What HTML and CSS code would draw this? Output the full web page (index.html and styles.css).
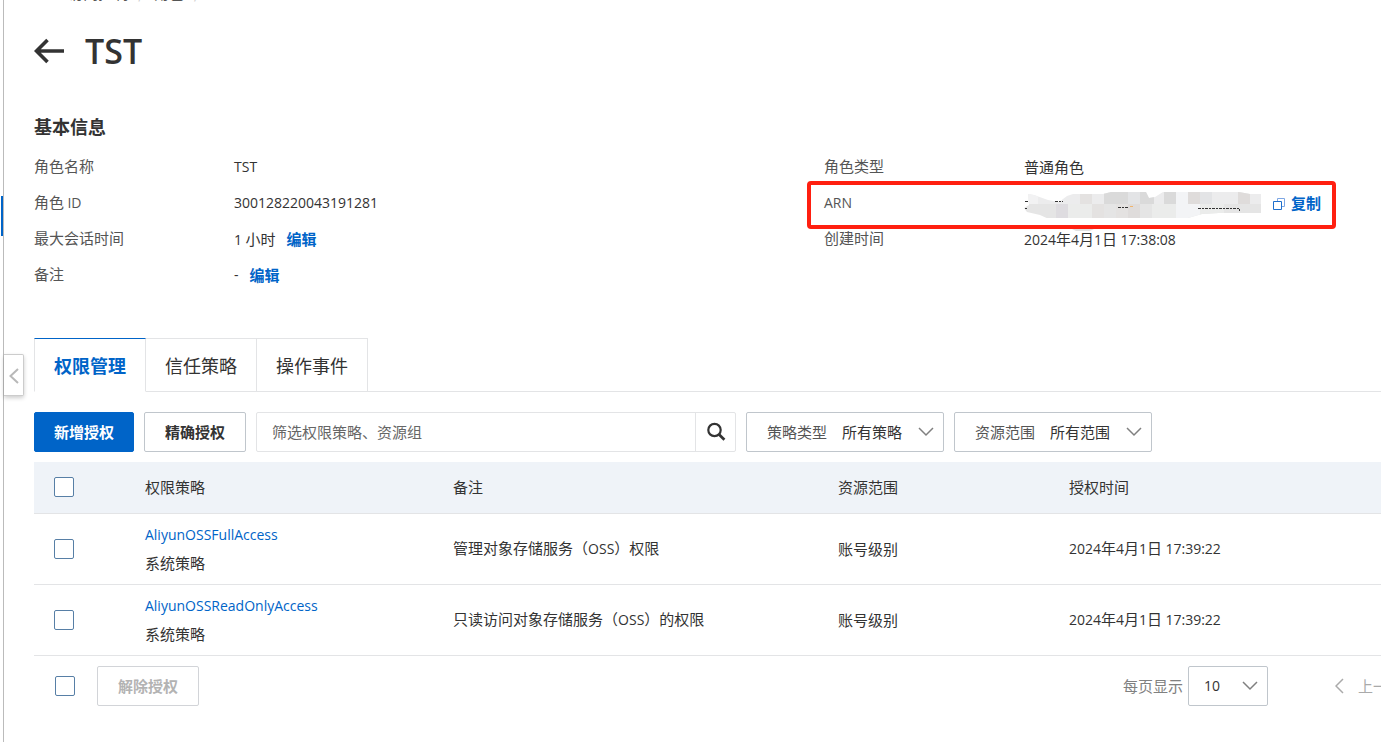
FILE: index.html
```html
<!DOCTYPE html>
<html lang="zh-CN">
<head>
<meta charset="utf-8">
<title>TST - RAM 访问控制</title>
<link rel="stylesheet" href="styles.css">
</head>
<body>
<div class="app">
  <aside class="rail">
    <span class="rail-active"></span>
    <button class="rail-toggle" type="button" aria-label="收起">
      <svg width="10" height="16" viewBox="0 0 10 16"><path d="M9 1 1.500 8 9 15" fill="none" stroke="#b8b8b8" stroke-width="2"/></svg>
    </button>
  </aside>
  <main class="main">
    <nav class="crumbs">
      <a href="#">RAM 访问控制</a><span class="sep">/</span><a href="#">角色</a><span class="sep">/</span>
    </nav>
    <header class="title">
      <a href="#" class="back" aria-label="返回">
        <svg width="31" height="26" viewBox="0 0 31 26"><path d="M13.500 2 2.500 13l11 11M3 13h27" fill="none" stroke="#333" stroke-width="3.600"/></svg>
      </a>
      <h1>TST</h1>
    </header>

    <section>
      <h2>基本信息</h2>
      <dl class="info">
        <div class="item"><dt>角色名称</dt><dd><span class="lat">TST</span></dd></div>
        <div class="item"><dt>角色类型</dt><dd>普通角色</dd></div>
        <div class="item"><dt>角色 <span class="lat">ID</span></dt><dd><span class="lat">300128220043191281</span></dd></div>
        <div class="item marked"><dt><span class="lat">ARN</span></dt>
          <dd>
            <svg class="mosaic" width="238" height="26" viewBox="0 0 238 26" aria-hidden="true">
              <defs><clipPath id="smear"><path d="M4 4l6 1 14 5 11 2 8-6 6-2h30l8-2h35l3 6 6-1 8-5h76l11 2h11v19h-42l-17 1-14 4-3 2H27l-11-5-13-3-3-4 5-3z"/></clipPath></defs>
              <g clip-path="url(#smear)">
                <path fill="#ececed" d="M0 0h238v14H0z"/>
                <path fill="#e5e5e5" d="M0 14h238v14H0z"/>
                <path fill="#f2f2f3" d="M4 0h10v14H4z"/>
                <path fill="#e4e2e1" d="M56 0h12v14H56zM68 14h12v14H68zM92 14h12v14H92z"/>
                <path fill="#dadada" d="M80 0h24v14H80zM116 0h14v14h-14zM140 0h12v14h-12z"/>
                <path fill="#dfdcdb" d="M164 0h12v14h-12zM214 0h12v14h-12zM104 14h12v14h-12z"/>
                <path fill="#dedce0" d="M32 14h12v14H32z"/>
                <path fill="#ebeceb" d="M44 14h24v14H44zM128 14h24v14h-24zM176 14h24v14h-24z"/>
                <path fill="#f3f4f6" d="M152 14h24v14h-24zM152 0h12v14h-12z"/>
                <path fill="#e3e4e6" d="M104 0h12v14h-12zM176 0h12v14h-12z"/>
              </g>
              <path stroke="#333" d="M1 11.500h3M31 11.500h8M94 17.500h10M174 18.500h42" stroke-dasharray="3 1 2 1" fill="none"/>
              <path fill="#333" d="M215 19h1v2h-1zM1 18h2v1H1z"/><path fill="#f0b46b" d="M106 16h3v1h-3z"/>
              <path fill="#e1e1e1" d="M46 38h26l-6 3H52z"/>
            </svg>
            <button class="link copy" type="button">
              <svg width="13" height="13" viewBox="0 0 13 13" fill="none"><path stroke="#1f6fcc" d="M.5 4.500h8v8h-8z"/><path stroke="#7da6e4" d="M4.500 4V1.500h7v8H9"/></svg>复制</button>
          </dd>
        </div>
        <div class="item"><dt>最大会话时间</dt><dd><span><span class="lat">1</span> 小时</span><button class="link" type="button">编辑</button></dd></div>
        <div class="item"><dt>创建时间</dt><dd><span><span class="lat">2024</span>年<span class="lat">4</span>月<span class="lat">1</span>日 <span class="lat">17:38:08</span></span></dd></div>
        <div class="item"><dt>备注</dt><dd><span class="lat">-</span><button class="link" type="button">编辑</button></dd></div>
      </dl>
    </section>

    <div class="tabs" role="tablist">
      <button class="tab active" role="tab" aria-selected="true" type="button">权限管理</button>
      <button class="tab" role="tab" aria-selected="false" type="button">信任策略</button>
      <button class="tab" role="tab" aria-selected="false" type="button">操作事件</button>
    </div>

    <form class="toolbar">
      <button class="btn primary" type="button">新增授权</button>
      <button class="btn" type="button">精确授权</button>
      <div class="search">
        <input type="text" placeholder="筛选权限策略、资源组" aria-label="筛选权限策略、资源组">
        <button type="button" aria-label="搜索">
          <svg width="20" height="20" viewBox="0 0 20 20" fill="none" stroke="#333"><circle cx="8.500" cy="8" r="6.200" stroke-width="2.200"/><path d="m12.800 12.300 5.600 5.400" stroke-width="2.800"/></svg>
        </button>
      </div>
      <div class="picker">
        <label for="ptype">策略类型</label>
        <select id="ptype"><option>所有策略</option></select>
        <svg class="chev" width="16" height="10" viewBox="0 0 16 10"><path d="m1 1 7 7 7-7"/></svg>
      </div>
      <div class="picker">
        <label for="scope">资源范围</label>
        <select id="scope"><option>所有范围</option></select>
        <svg class="chev" width="16" height="10" viewBox="0 0 16 10"><path d="m1 1 7 7 7-7"/></svg>
      </div>
    </form>

    <table class="grid">
      <colgroup><col class="c-check"><col class="c-policy"><col class="c-note"><col class="c-scope"><col></colgroup>
      <thead>
        <tr><th><input type="checkbox" aria-label="全选"></th><th>权限策略</th><th>备注</th><th>资源范围</th><th>授权时间</th></tr>
      </thead>
      <tbody>
        <tr>
          <td><input type="checkbox" aria-label="AliyunOSSFullAccess"></td>
          <td><a href="#" class="lat">AliyunOSSFullAccess</a><div>系统策略</div></td>
          <td>管理对象存储服务<span class="paren" lang="zh-TW">（</span><span class="lat">OSS</span><span class="paren" lang="zh-TW">）</span>权限</td>
          <td>账号级别</td>
          <td><span class="lat">2024</span>年<span class="lat">4</span>月<span class="lat">1</span>日 <span class="lat">17:39:22</span></td>
        </tr>
        <tr>
          <td><input type="checkbox" aria-label="AliyunOSSReadOnlyAccess"></td>
          <td><a href="#" class="lat">AliyunOSSReadOnlyAccess</a><div>系统策略</div></td>
          <td>只读访问对象存储服务<span class="paren" lang="zh-TW">（</span><span class="lat">OSS</span><span class="paren" lang="zh-TW">）</span>的权限</td>
          <td>账号级别</td>
          <td><span class="lat">2024</span>年<span class="lat">4</span>月<span class="lat">1</span>日 <span class="lat">17:39:22</span></td>
        </tr>
      </tbody>
    </table>

    <footer class="foot">
      <input type="checkbox" aria-label="全选本页">
      <button class="btn" type="button" disabled>解除授权</button>
      <label class="per-label" for="per">每页显示</label>
      <div class="picker small">
        <select id="per" class="lat"><option>10</option></select>
        <svg class="chev" width="16" height="10" viewBox="0 0 16 10"><path d="m1 1 7 7 7-7"/></svg>
      </div>
      <nav class="pager">
        <button type="button" disabled><svg width="9" height="16" viewBox="0 0 9 16"><path d="M8 1 1 8l7 7" fill="none" stroke="#aaa" stroke-width="1.500"/></svg>上一页</button>
      </nav>
    </footer>
  </main>
</div>
</body>
</html>
```

FILE: styles.css
```css
* { box-sizing: border-box; }

body {
  margin: 0;
  background: #fff;
  color: #333;
  font: 15px/20px "Noto Sans CJK SC", sans-serif;
}

button, input, select { font: inherit; color: inherit; }
button { padding: 0; border: 0; background: none; cursor: pointer; }
a { color: #0064c8; text-decoration: none; }
svg { display: block; flex: none; }
.lat { font-family: "Open Sans", "Noto Sans CJK SC", sans-serif; font-size: 14px; }
.paren { font-family: "Noto Sans CJK TC", sans-serif; }

.app { display: flex; min-height: 100vh; }

.rail {
  position: relative;
  flex: 0 0 4px;
  border-right: 1px solid #bbb;
}
.rail-active {
  position: absolute;
  top: 196px;
  left: 1px;
  width: 2px;
  height: 40px;
  background: #0064c8;
}
.rail-toggle {
  position: absolute;
  top: 354px;
  left: 4px;
  width: 20px;
  height: 42px;
  padding: 2px 0 0 5px;
  border: 1px solid #ccc;
  border-left: 0;
  border-radius: 0 2px 2px 0;
  background: #fff;
  box-shadow: 0 2px 4px rgba(0, 0, 0, .2);
}

.main { flex: 1; min-width: 0; padding-left: 30px; overflow: hidden; }

.crumbs {
  display: flex;
  align-items: flex-end;
  height: 3px;
  overflow: hidden;
  white-space: nowrap;
}
.crumbs a { color: #555; }
.crumbs .sep { padding: 0 10px; color: #ccc; }

.title {
  display: flex;
  align-items: center;
  gap: 20px;
  height: 96px;
}
.title h1 {
  margin: 0;
  font: 600 34px/48px "Open Sans", sans-serif;
}

h2 { margin: 13px 0 8px; font-size: 18px; line-height: 28px; }

.info {
  display: grid;
  grid-template-columns: 790fr 557fr;
  grid-auto-rows: 36px;
  margin: 0 0 46px;
}
.item { position: relative; display: flex; align-items: center; }
.item dt { flex: 0 0 200px; color: #555; }
.item dd { display: flex; align-items: center; gap: 11px; margin: 2px 0 0; white-space: nowrap; }
.link { color: #0064c8; font-weight: 700; }
.marked::after {
  content: "";
  position: absolute;
  inset: -3px 45px -9px -17px;
  border: 4px solid #ff1f10;
  border-radius: 4px;
}
.mosaic { overflow: visible; }
.copy { display: flex; align-items: center; gap: 5px; }

.tabs { display: flex; height: 54px; border-bottom: 1px solid #e3e4e6; }
.tab {
  height: 54px;
  padding: 0 19px;
  border: 1px solid #e3e4e6;
  border-left-width: 0;
  font-size: 18px;
}
.tab.active {
  border-left-width: 1px;
  border-top-color: #0064c8;
  border-bottom-color: #fff;
  color: #0064c8;
  font-weight: 700;
}

.toolbar { display: flex; gap: 10px; margin: 20px 0 10px; }
.btn {
  height: 40px;
  padding: 0 20px;
  border: 1px solid #c0c6cc;
  border-radius: 2px;
  background: #fff;
  font-weight: 700;
  white-space: nowrap;
}
.btn.primary { padding: 0 19px; border-color: #0064c8; background: #0064c8; color: #fff; }
.btn:disabled { border-color: #d2d4d8; color: #b3b3b3; }

.search {
  display: flex;
  flex: 0 1 480px;
  height: 40px;
  border: 1px solid #e3e4e6;
  border-radius: 2px;
}
.search input { flex: 1; min-width: 0; padding: 0 15px; border: 0; background: none; outline: 0; }
.search input::placeholder { color: #666; opacity: 1; }
.search button {
  display: flex;
  align-items: center;
  justify-content: center;
  width: 40px;
  border-left: 1px solid #e3e4e6;
}

.picker {
  display: flex;
  align-items: center;
  height: 40px;
  padding: 0 9px 0 20px;
  border: 1px solid #c0c6cc;
  border-radius: 2px;
}
.picker label { margin-right: 15px; color: #555; }
.picker select {
  margin-right: 15px;
  padding: 0;
  border: 0;
  appearance: none;
  background: none;
}
.chev path { fill: none; stroke: #808080; stroke-width: 1.500; }
.picker.small { width: 80px; padding-left: 15px; }
.small select { flex: 1; }

input[type="checkbox"] {
  appearance: none;
  display: block;
  width: 20px;
  height: 20px;
  margin: 0;
  border: 1px solid #577fa6;
  border-radius: 2px;
  background: #fff;
}

.grid { width: 100%; border-collapse: collapse; table-layout: fixed; }
.c-check { width: 8.240%; }
.c-policy { width: 22.870%; }
.c-note { width: 28.580%; }
.c-scope { width: 17.150%; }
.grid th, .grid td { padding: 0; border-bottom: 1px solid #e3e4e6; text-align: left; font-weight: 400; }
.grid th { height: 51px; background: #eff3f8; }
.grid td { height: 71px; line-height: 28px; }
.grid th:first-child, .grid td:first-child { padding-left: 20px; }

.foot { display: flex; align-items: center; padding: 10px 0 36px 21px; }
.foot .btn { margin-left: 22px; }
.per-label { margin-left: auto; margin-right: 5px; color: #808080; }
.pager { flex: 0 0 46px; min-width: 0; margin-left: 67px; white-space: nowrap; }
.pager button { display: flex; align-items: center; gap: 14px; color: #aaa; }
```
